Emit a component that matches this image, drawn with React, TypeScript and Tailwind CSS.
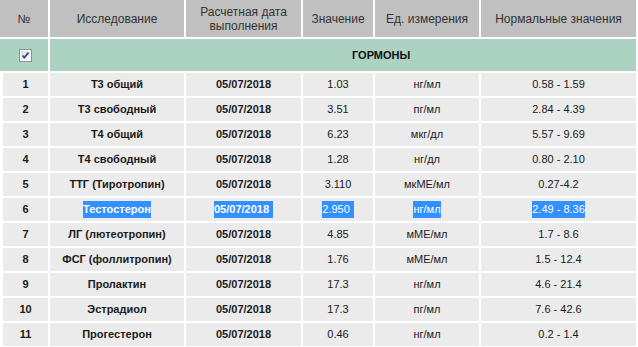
const rows = [
  ["1", "Т3 общий", "05/07/2018", "1.03", "нг/мл", "0.58 - 1.59"],
  ["2", "Т3 свободный", "05/07/2018", "3.51", "пг/мл", "2.84 - 4.39"],
  ["3", "Т4 общий", "05/07/2018", "6.23", "мкг/дл", "5.57 - 9.69"],
  ["4", "Т4 свободный", "05/07/2018", "1.28", "нг/дл", "0.80 - 2.10"],
  ["5", "ТТГ (Тиротропин)", "05/07/2018", "3.110", "мкМЕ/мл", "0.27-4.2"],
  ["6", "Тестостерон", "05/07/2018", "2.950", "нг/мл", "2.49 - 8.36"],
  ["7", "ЛГ (лютеотропин)", "05/07/2018", "4.85", "мМЕ/мл", "1.7 - 8.6"],
  ["8", "ФСГ (фоллитропин)", "05/07/2018", "1.76", "мМЕ/мл", "1.5 - 12.4"],
  ["9", "Пролактин", "05/07/2018", "17.3", "нг/мл", "4.6 - 21.4"],
  ["10", "Эстрадиол", "05/07/2018", "17.3", "пг/мл", "7.6 - 42.6"],
  ["11", "Прогестерон", "05/07/2018", "0.46", "нг/мл", "0.2 - 1.4"],
]

const cols = "grid grid-cols-[48px_134px_115px_70px_104px_155px] gap-x-[2px]"

const Checkbox = () => (
  <svg width="13" height="13" viewBox="0 0 13 13">
    <defs>
      <linearGradient id="cb" x1="0" y1="0" x2="1" y2="1">
        <stop offset="0" stopColor="#dcdcdc" />
        <stop offset="1" stopColor="#ffffff" />
      </linearGradient>
    </defs>
    <rect x="0.5" y="0.5" width="12" height="12" fill="#fff" stroke="#8e8f8f" />
    <rect x="2" y="2" width="9" height="9" fill="url(#cb)" />
    <path d="M3.5 6.5 L5.3 8.6 L9.5 3.6" fill="none" stroke="#2a45a8" strokeWidth="1.8" />
  </svg>
)

const Sel = ({ children, pad }: { children: string; pad?: boolean }) => (
  <span className={`bg-[#3390ff] text-white ${pad ? "pr-[4px]" : ""}`}>{children}</span>
)

const App = () => {
  return (
    <div
      className="w-[636px] bg-white flex flex-col gap-y-[2px] text-[11px] text-[#1a1a1a]"
      style={{ fontFamily: '"Liberation Sans", Arial, sans-serif' }}>
      <div className={`${cols} h-[37px] text-[12px] leading-[14px] text-[#333]`}>
        <div className="bg-[#c0c0c0] flex items-center justify-center">№</div>
        <div className="bg-[#c0c0c0] flex items-center justify-center">Исследование</div>
        <div className="bg-[#c0c0c0] flex items-center justify-center text-center">
          Расчетная дата
          <br />
          выполнения
        </div>
        <div className="bg-[#c0c0c0] flex items-center justify-center">Значение</div>
        <div className="bg-[#c0c0c0] flex items-center justify-center">Ед. измерения</div>
        <div className="bg-[#c0c0c0] flex items-center justify-center">Нормальные значения</div>
      </div>
      <div className={`${cols} h-[32px]`}>
        <div className="bg-[#acd2c1] flex items-center justify-center pl-[2px]">
          <Checkbox />
        </div>
        <div className="col-span-5 bg-[#acd2c1] flex items-center pl-[302px] font-bold text-[#111]">
          ГОРМОНЫ
        </div>
      </div>
      {rows.map((r) => {
        const sel = r[0] === "6"
        return (
          <div key={r[0]} className={`${cols} h-[23px]`}>
            <div className="ml-[3px] bg-[#ebebeb] flex items-center justify-center font-bold">
              {r[0]}
            </div>
            <div className="bg-[#ebebeb] flex items-center justify-center font-bold">
              {sel ? <Sel>{r[1]}</Sel> : r[1]}
            </div>
            <div className="bg-[#ebebeb] flex items-center justify-center font-bold">
              {sel ? <Sel pad>{r[2]}</Sel> : r[2]}
            </div>
            <div className="bg-[#ebebeb] flex items-center justify-center">
              {sel ? <Sel pad>{r[3]}</Sel> : r[3]}
            </div>
            <div className="bg-[#ebebeb] flex items-center justify-center">
              {sel ? <Sel>{r[4]}</Sel> : r[4]}
            </div>
            <div className="bg-[#ebebeb] flex items-center justify-center">
              {sel ? <Sel>{r[5]}</Sel> : r[5]}
            </div>
          </div>
        )
      })}
    </div>
  )
}

export default App
